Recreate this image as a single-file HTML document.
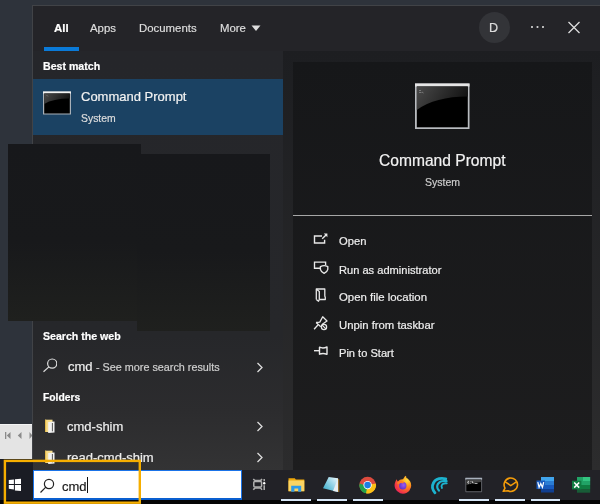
<!DOCTYPE html>
<html><head><meta charset="utf-8">
<style>
*{margin:0;padding:0;box-sizing:border-box}
html,body{width:600px;height:504px;overflow:hidden;background:#2e333b;font-family:"Liberation Sans",sans-serif;color:#fff}
.a{position:absolute}
.t{position:absolute;white-space:nowrap;line-height:1;will-change:transform;-webkit-text-stroke:0.2px currentColor}
</style></head><body>
<!-- panel border -->
<div class="a" style="left:32px;top:5px;width:568px;height:465px;background:#414347"></div>
<!-- header -->
<div class="a" style="left:33px;top:6px;width:567px;height:45px;background:#242428"></div>
<!-- gap area -->
<div class="a" style="left:33px;top:51px;width:567px;height:419px;background:linear-gradient(#1d1e21,#2c2c2d)"></div>
<!-- left list -->
<div class="a" style="left:33px;top:51px;width:250px;height:419px;background:linear-gradient(#25262a 0%,#26272a 68%,#2c2c2e 86%,#333334 100%)"></div>
<!-- right panel -->
<div class="a" style="left:293px;top:62px;width:299px;height:408px;background:linear-gradient(#161719,#1d1d1e)"></div>

<!-- tabs -->
<div class="t" style="left:54px;top:23px;font-size:11.5px;font-weight:bold">All</div>
<div class="a" style="left:44px;top:46.5px;width:35px;height:4px;background:#0a7ad8"></div>
<div class="t" style="left:90px;top:23px;font-size:11.4px;color:#ddd">Apps</div>
<div class="t" style="left:139px;top:23px;font-size:11.4px;color:#ddd">Documents</div>
<div class="t" style="left:220px;top:23px;font-size:11.4px;color:#ddd">More</div>
<svg class="a" style="left:251px;top:24.5px" width="10" height="7"><path d="M0.5 0.5H9.5L5 6Z" fill="#ddd"/></svg>
<div class="a" style="left:479px;top:12px;width:31px;height:31px;border-radius:50%;background:#333438"></div>
<div class="t" style="left:489px;top:22px;font-size:12.6px;color:#ddd">D</div>
<svg class="a" style="left:530px;top:25px" width="16" height="4"><circle cx="2" cy="2" r="1.05" fill="#ddd"/><circle cx="7.5" cy="2" r="1.05" fill="#ddd"/><circle cx="13" cy="2" r="1.05" fill="#ddd"/></svg>
<svg class="a" style="left:567px;top:21px" width="14" height="13"><path d="M1.5 1L12.5 12M12.5 1L1.5 12" stroke="#ddd" stroke-width="1.3"/></svg>

<!-- best match -->
<div class="t" style="left:43px;top:60.5px;font-size:10.6px;font-weight:bold">Best match</div>
<div class="a" style="left:33px;top:79px;width:250px;height:56px;background:#1b4263"></div>
<svg class="a" style="left:43px;top:91px" width="28" height="24" viewBox="0 0 28 24">
<defs><linearGradient id="g1" x1="0" y1="0" x2="1" y2="0.3"><stop offset="0" stop-color="#4a4a4a"/><stop offset="1" stop-color="#151515"/></linearGradient></defs>
<rect x="0" y="0.5" width="28" height="23" fill="#a9b0b8"/>
<rect x="0" y="0.5" width="28" height="2" fill="#f2f2f2"/>
<rect x="1.2" y="2.5" width="25.6" height="20" fill="#000"/>
<path d="M1.2 2.5H26.8V7.5Q10 7.5 1.2 13Z" fill="url(#g1)"/>
<path d="M3.5 4L5 5.5" stroke="#777" stroke-width="0.8"/>
</svg>
<div class="t" style="left:81px;top:90px;font-size:13px;color:#f2f2f2">Command Prompt</div>
<div class="t" style="left:81px;top:114px;font-size:10.4px;color:#ddd">System</div>

<!-- redaction boxes -->
<div class="a" style="left:8px;top:144px;width:133px;height:177px;background:linear-gradient(#17181b 0%,#18191b 55%,#1f201e 100%)"></div>
<div class="a" style="left:137px;top:154px;width:132.5px;height:176.5px;background:linear-gradient(#17181b 0%,#18191b 55%,#1f201e 100%)"></div>

<!-- search the web -->
<div class="t" style="left:43px;top:331px;font-size:10.6px;font-weight:bold">Search the web</div>
<svg class="a" style="left:41px;top:356px" width="16" height="18"><circle cx="11.2" cy="7.6" r="4.6" fill="none" stroke="#ddd" stroke-width="1.2"/><path d="M7.9 10.9L2.5 15.8" stroke="#ddd" stroke-width="1.2"/></svg>
<div class="t" style="left:68px;top:360px;font-size:13px;color:#eee">cmd</div>
<div class="t" style="left:96px;top:362px;font-size:10.8px;color:#cfcfcf">- See more search results</div>
<svg class="a" style="left:256px;top:362px" width="8" height="11"><path d="M1.5 1L6 5.5L1.5 10" fill="none" stroke="#ddd" stroke-width="1.3"/></svg>

<!-- folders -->
<div class="t" style="left:43px;top:393px;font-size:10.3px;font-weight:bold">Folders</div>
<svg class="a" style="left:44px;top:419px" width="12" height="15"><rect x="1" y="0.7" width="7.5" height="12.3" fill="#f7dc8a"/><rect x="1" y="0.7" width="1.2" height="12.3" fill="#e3b94c"/><path d="M4.2 3L10.5 2.6V13.6L4.2 13.9Z" fill="#f2f2f2"/><path d="M8.4 4V12.3" stroke="#555" stroke-width="1"/></svg>
<div class="t" style="left:67px;top:420px;font-size:13px;color:#eee">cmd-shim</div>
<svg class="a" style="left:256px;top:421px" width="8" height="11"><path d="M1.5 1L6 5.5L1.5 10" fill="none" stroke="#ddd" stroke-width="1.3"/></svg>
<svg class="a" style="left:44px;top:450px" width="12" height="15"><rect x="1" y="0.7" width="7.5" height="12.3" fill="#f7dc8a"/><rect x="1" y="0.7" width="1.2" height="12.3" fill="#e3b94c"/><path d="M4.2 3L10.5 2.6V13.6L4.2 13.9Z" fill="#f2f2f2"/><path d="M8.4 4V12.3" stroke="#555" stroke-width="1"/></svg>
<div class="t" style="left:67px;top:451px;font-size:13px;color:#eee">read-cmd-shim</div>
<svg class="a" style="left:256px;top:452px" width="8" height="11"><path d="M1.5 1L6 5.5L1.5 10" fill="none" stroke="#ddd" stroke-width="1.3"/></svg>

<!-- right panel content -->
<svg class="a" style="left:415px;top:83px" width="55" height="46" viewBox="0 0 55 46">
<defs><linearGradient id="g2" x1="0" y1="0" x2="1" y2="0.3"><stop offset="0" stop-color="#4a4a4a"/><stop offset="1" stop-color="#141414"/></linearGradient></defs>
<rect x="0" y="0.5" width="54.5" height="45.5" fill="#b9bcc0"/>
<rect x="0" y="0.5" width="54.5" height="3" fill="#e6e6e6"/>
<rect x="1.8" y="3.5" width="51" height="40.8" fill="#000"/>
<path d="M1.8 3.5H52.8V13.5Q20 13.5 1.8 27Z" fill="url(#g2)"/>
<path d="M4 7.5h2M4 9.5h2.5M7 9l1.5 1" stroke="#888" stroke-width="0.8"/>
</svg>
<div class="t" style="left:379px;top:153px;font-size:15.6px;color:#f2f2f2">Command Prompt</div>
<div class="t" style="left:425px;top:177px;font-size:10.5px;color:#ccc">System</div>
<div class="a" style="left:293px;top:215px;width:299px;height:1px;background:#a6a6a6"></div>

<div class="t" style="left:339px;top:236px;font-size:11.2px;color:#eee">Open</div>
<div class="t" style="left:339px;top:265px;font-size:11.1px;color:#eee">Run as administrator</div>
<div class="t" style="left:339px;top:292px;font-size:11.4px;color:#eee">Open file location</div>
<div class="t" style="left:339px;top:319.5px;font-size:11.3px;color:#eee">Unpin from taskbar</div>
<div class="t" style="left:339px;top:348px;font-size:11.1px;color:#eee">Pin to Start</div>


<!-- action icons -->
<svg class="a" style="left:312px;top:232px" width="17" height="14" fill="none" stroke="#e8e8e8" stroke-width="1.4">
<path d="M10 4H2.5V11H12.6V7.8"/><path d="M10.2 6.8L14.3 2.7"/><path d="M11.8 1.6H15.4V5.2Z" fill="#e8e8e8" stroke="none"/>
</svg>
<svg class="a" style="left:312px;top:259px" width="18" height="17" fill="none" stroke="#e8e8e8" stroke-width="1.35">
<path d="M8.2 9.2H2.5V3.1H13.6V6"/><path d="M8.4 7.6Q12.1 5.6 15.8 7.6V10.3Q15.2 13 12.1 14.3Q9 13 8.4 10.3Z"/>
</svg>
<svg class="a" style="left:313px;top:286px" width="16" height="18" fill="none" stroke="#e8e8e8" stroke-width="1.3" stroke-linejoin="round">
<path d="M3.3 13.5V3H11.8V10L12.3 11.5V13.5H6.5"/><path d="M3.5 3.2L6.3 5.5V13.5L5.5 15.2L3.3 13.5"/>
</svg>
<svg class="a" style="left:312px;top:314px" width="17" height="18" fill="none" stroke="#e8e8e8" stroke-width="1.3" stroke-linejoin="round">
<path d="M4.1 8.5L7.8 8.1L10.7 2.8L15 7L10.3 10.3L10 12"/><path d="M4.1 8.5L8.8 12.8"/><path d="M6.1 10.7L2.1 15.2"/>
<circle cx="12" cy="13" r="2.6"/><path d="M10.2 11.2L13.8 14.8" stroke-width="1.1"/>
</svg>
<svg class="a" style="left:312px;top:344px" width="18" height="13" fill="none" stroke="#e8e8e8" stroke-width="1.4" stroke-linejoin="round">
<path d="M2 6.7H7"/><path d="M7.5 3.2V10.2Q11 8.6 15 10.3V3Q11 4.8 7.5 3.2Z"/>
</svg>
<!-- left light grey strip -->
<div class="a" style="left:0;top:424px;width:32px;height:35px;background:#e4e4e4;border-top:1px solid #f4f4f4"></div>
<svg class="a" style="left:0;top:430px" width="32" height="12" fill="#8a8a8a"><rect x="5" y="2" width="1.3" height="7"/><path d="M10.5 2L6.8 5.5L10.5 9Z"/><path d="M21.5 2L17.8 5.5L21.5 9Z"/><path d="M29.5 2L32.5 5.5L29.5 9Z"/></svg>

<!-- taskbar -->
<div class="a" style="left:0;top:470px;width:600px;height:34px;background:#222227"></div>
<div class="a" style="left:0;top:459px;width:33px;height:41px;background:#1a1c24"></div>
<div class="a" style="left:0;top:500px;width:600px;height:4px;background:#050505"></div>

<!-- taskbar icons -->
<svg class="a" style="left:8px;top:478px" width="14" height="14" fill="#fff">
<path d="M0.8 2.1L5.9 1.4V5.9H0.8Z"/><path d="M6.9 1.3L13 0.7V5.9H6.9Z"/><path d="M0.8 6.9H5.9V11.4L0.8 10.7Z"/><path d="M6.9 6.9H13V13.1L6.9 12.4Z"/>
</svg>
<svg class="a" style="left:252px;top:478px" width="14" height="13" fill="none" stroke="#b0b0b0" stroke-width="1.5">
<rect x="1.8" y="3.6" width="7.8" height="5.4" rx="1"/><path d="M1.3 1Q2.5 2.5 3.5 2.6H8Q9 2.5 10 1"/><path d="M1.3 11.8Q2.5 10.2 3.5 10.1H8Q9 10.2 10 11.8"/><path d="M12.2 1V3.3M12.2 7.2V12"/>
<circle cx="12.2" cy="5.3" r="1.2" fill="#fff" stroke="none"/>
</svg>
<svg class="a" style="left:288px;top:478px" width="17" height="15">
<path d="M0.5 0.2H6.8L7.8 1.6H16.3V13.2H0.5Z" fill="#f0a80a"/>
<rect x="0.5" y="2.5" width="15.8" height="10.7" fill="#fcd462"/>
<path d="M3.2 13.8V7.8H13.2V13.8H10.2V10.5H6.4V13.8Z" fill="#2f9ae8"/>
</svg>
<svg class="a" style="left:322px;top:476px" width="19" height="17">
<defs><linearGradient id="np" x1="0" y1="1" x2="1" y2="0"><stop offset="0" stop-color="#2aa5c4"/><stop offset="0.6" stop-color="#9fd8ea"/><stop offset="1" stop-color="#f2fbff"/></linearGradient></defs>
<path d="M16 2.6L17.3 3.4V15.9L16 16Z" fill="#8f6a2a"/>
<path d="M6.7 1L16 2.2V16L1 12.2Z" fill="url(#np)"/>
<path d="M16 2.2V16L11 15Z" fill="#e8eef2"/>
</svg>
<svg class="a" style="left:358px;top:476px" width="19" height="19" viewBox="0 0 19 19">
<circle cx="9.6" cy="9.1" r="8.3" fill="#dd4b3e"/>
<path d="M9.6 9.1L1.3 9.1A8.3 8.3 0 0 0 9.6 17.4Z" fill="#22a14a"/>
<path d="M1.6 7.5A8.3 8.3 0 0 0 7 17L10.5 10.5Z" fill="#22a14a"/>
<path d="M9.6 9.1L17.9 7.5A8.3 8.3 0 0 1 8 17.3Z" fill="#fbc116"/>
<circle cx="9.6" cy="9.1" r="4.2" fill="#fff"/>
<circle cx="9.6" cy="9.1" r="3.3" fill="#1d7de0"/>
</svg>
<svg class="a" style="left:393px;top:475px" width="20" height="20" viewBox="0 0 20 20">
<defs><radialGradient id="ff" cx="0.75" cy="0.25" r="0.95"><stop offset="0" stop-color="#ffe03a"/><stop offset="0.4" stop-color="#ff8a1a"/><stop offset="0.8" stop-color="#f2304a"/><stop offset="1" stop-color="#e0206a"/></radialGradient>
<radialGradient id="fp" cx="0.6" cy="0.4" r="0.7"><stop offset="0" stop-color="#9a5cf2"/><stop offset="1" stop-color="#5a2bc4"/></radialGradient></defs>
<path d="M11.5 2.2A8.3 8.3 0 1 1 2.2 7.2L3.4 4.3L4.8 6.6Q7 4 10 4.3L12.3 0.8Q14 2 13.2 3Z" fill="url(#ff)"/>
<circle cx="9.8" cy="10.8" r="3.7" fill="url(#fp)"/>
<path d="M4.6 8.6Q7 6.2 10.6 7.6" stroke="#ff7f22" stroke-width="2" fill="none"/>
</svg>
<svg class="a" style="left:428px;top:474px" width="22" height="22" viewBox="0 0 22 22" fill="none" stroke="#1cb3cf" stroke-linecap="round">
<path d="M7 18.8C2 13 4.5 2.5 17.8 4.8" stroke-width="2.8"/>
<path d="M10.9 16.6C7.3 12.5 9.5 5.8 18.6 7.2" stroke-width="2.2"/>
<path d="M14 14C12.6 11.3 14.5 8.8 18.8 9.3" stroke-width="1.8"/>
</svg>
<svg class="a" style="left:465px;top:477px" width="18" height="16">
<rect x="0.3" y="0.8" width="16.8" height="14.4" rx="0.8" fill="#5e6066"/>
<rect x="0.3" y="0.8" width="16.8" height="1.8" fill="#a9b1bd"/>
<rect x="1.3" y="2.6" width="14.8" height="11.6" fill="#000"/>
<path d="M1.3 3H16.1V5Q9 5.3 1.3 8Z" fill="#444"/>
<path d="M3.8 4.3Q2.8 4.3 2.8 5.3Q2.8 6.3 3.8 6.3M5.5 4.6V4.9M5.5 6V6.3M7 4.2L8.2 6.4" stroke="#eee" stroke-width="0.9" fill="none"/>
<path d="M9.5 6.5H12.5" stroke="#bbb" stroke-width="0.9"/>
</svg>
<svg class="a" style="left:501px;top:476px" width="19" height="17" viewBox="0 0 19 17" fill="none" stroke="#f39c0a" stroke-width="1.6">
<path d="M4 12.05A6.7 6.7 0 1 1 6.97 14.77L2.2 15.3Z" stroke-linejoin="round"/>
<path d="M3.9 5.6L9.8 9.6L15.7 5.6"/>
</svg>
<svg class="a" style="left:536px;top:477px" width="19" height="16">
<rect x="5" y="0" width="13" height="4" fill="#41a5ee"/>
<rect x="5" y="4" width="13" height="4" fill="#2b7cd3"/>
<rect x="5" y="8" width="13" height="4" fill="#185abd"/>
<rect x="5" y="12" width="13" height="3.5" fill="#103f91"/>
<rect x="0.5" y="3.5" width="8.5" height="8.5" fill="#185abd"/>
<path d="M1.8 5.2L3.1 10.3L4.75 6.5L6.4 10.3L7.7 5.2" stroke="#fff" stroke-width="1.2" fill="none"/>
</svg>
<svg class="a" style="left:571px;top:477px" width="20" height="16">
<rect x="6" y="0" width="13.2" height="4" fill="#33c481"/>
<rect x="6" y="0" width="6" height="8" fill="#21a366"/>
<rect x="12" y="4" width="7.2" height="4" fill="#21a366"/>
<rect x="6" y="8" width="13.2" height="4" fill="#107c41"/>
<rect x="6" y="12" width="13.2" height="3.7" fill="#185c37"/>
<rect x="1" y="3.7" width="9.4" height="8.7" fill="#107c41"/>
<path d="M3.2 5.5L8.2 10.6M8.2 5.5L3.2 10.6" stroke="#fff" stroke-width="1.5"/>
</svg>
<div class="a" style="left:281px;top:498.5px;width:30px;height:2px;background:#d6e6f6"></div>
<div class="a" style="left:317px;top:498.5px;width:30px;height:2px;background:#d6e6f6"></div>
<div class="a" style="left:353px;top:498.5px;width:30px;height:2px;background:#d6e6f6"></div>
<div class="a" style="left:459px;top:498.5px;width:30px;height:2px;background:#d6e6f6"></div>
<div class="a" style="left:495px;top:498.5px;width:30px;height:2px;background:#d6e6f6"></div>
<div class="a" style="left:531px;top:498.5px;width:29px;height:2px;background:#d6e6f6"></div>
<!-- search box -->
<div class="a" style="left:33px;top:470px;width:208.5px;height:30px;background:#fff;border:1.5px solid #1a73e8;border-bottom:2px solid #0a5fd0"></div>
<svg class="a" style="left:38px;top:476.7px" width="18" height="18"><circle cx="11" cy="7" r="4.6" fill="none" stroke="#222" stroke-width="1.2"/><path d="M7.8 10.2L2.5 15.5" stroke="#222" stroke-width="1.2"/></svg>
<div class="t" style="left:62px;top:479.5px;font-size:13px;color:#1a1a1a">cmd</div>
<div class="a" style="left:87px;top:477px;width:1px;height:16px;background:#111"></div>
<!-- orange highlight -->
<svg class="a" style="left:0;top:455px" width="150" height="49"><rect x="4.9" y="5.9" width="134.9" height="41.8" fill="none" stroke="#f6ae00" stroke-width="2.4"/></svg>
</body></html>
